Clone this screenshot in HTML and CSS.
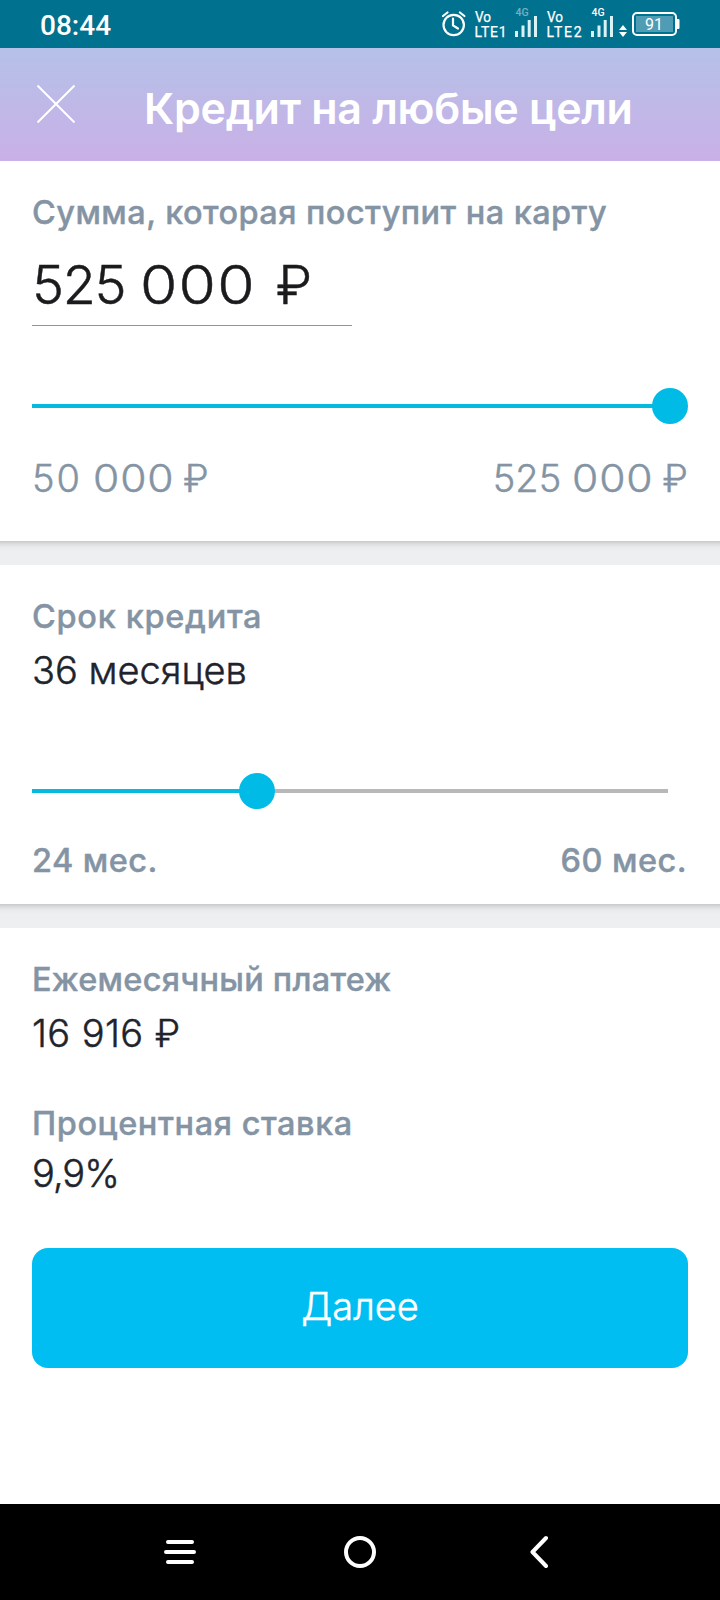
FILE: index.html
```html
<!DOCTYPE html>
<html lang="ru">
<head>
<meta charset="utf-8">
<title>Кредит на любые цели</title>
<link rel="stylesheet" href="styles.css">
</head>
<body>
<div class="status">
  <span class="clock">08:44</span>
  <svg class="indicators" width="250" height="48" viewBox="432 0 250 48" fill="none">
    <g stroke="#fff" stroke-width="2.2" stroke-linecap="round">
      <circle cx="453.7" cy="25" r="10.2"/>
      <path d="M453 18.5v7l5 3M443 16l4.500-3.500M464.400 16l-4.500-3.500"/>
    </g>
    <g fill="#fff" font-size="14" stroke="#fff" stroke-width=".25">
      <text x="475" y="22" textLength="16" lengthAdjust="spacingAndGlyphs">Vo</text>
      <text x="474.500" y="36.500" textLength="32" lengthAdjust="spacing">LTE1</text>
      <text x="547" y="22" textLength="16" lengthAdjust="spacingAndGlyphs">Vo</text>
      <text x="546.500" y="36.500" textLength="35" lengthAdjust="spacing">LTE2</text>
    </g>
    <g fill="#fff" font-size="10.500" font-weight="500">
      <text x="515.500" y="15.500" opacity=".45">4G</text>
      <text x="591.500" y="15.500">4G</text>
    </g>
    <path stroke="#d9f2f6" stroke-width="3" d="M516.500 37v-6M523 37V25.500M529.200 37V20M535.500 37V16M592.500 37v-6M599 37V25.500M605.200 37V20M611.500 37V16"/>
    <path fill="#fff" d="M619 30l4-5 4 5zM619 32l4 5 4-5z"/>
    <rect x="633" y="13" width="43" height="22" rx="4" stroke="#fff" stroke-width="2"/>
    <rect x="636" y="16" width="37" height="16" fill="#4f9db4"/>
    <path fill="#fff" d="M677 19h1.500q1 0 1 1v8q0 1-1 1H677z"/>
    <text x="654" y="30" fill="#fff" font-size="16" text-anchor="middle">91</text>
  </svg>
</div>
<header class="header">
  <svg class="close" width="38" height="38" viewBox="0 0 38 38" stroke="#fff" stroke-width="2"><path d="M.5.5l37 37M37.500.5l-37 37"/></svg>
  <h1 class="title">Кредит на любые цели</h1>
</header>
<main>
  <section class="card card-amount">
    <div class="label label-sum">Сумма, которая поступит на карту</div>
    <div class="amount"><span><span class="lead">525</span> <span class="zeros">000</span></span><span>₽</span></div>
    <div class="slider"><div class="fill" style="width:638px"></div><div class="thumb"></div></div>
    <div class="limits limits-sum"><span><span class="wide">50</span> <span class="zeros">000</span> ₽</span><span><span>525</span> <span class="zeros">000</span> ₽</span></div>
  </section>
  <div class="divider"></div>
  <section class="card card-term">
    <div class="label label-term">Срок кредита</div>
    <div class="value value-term">36 месяцев</div>
    <div class="slider"><div class="fill" style="width:225px"></div><div class="thumb"></div></div>
    <div class="limits limits-term"><span>24 мес.</span><span>60 мес.</span></div>
  </section>
  <div class="divider"></div>
  <section class="card card-result">
    <div class="label label-pay">Ежемесячный платеж</div>
    <div class="value value-pay">16 916 ₽</div>
    <div class="label label-rate">Процентная ставка</div>
    <div class="value value-rate">9,9%</div>
    <button class="next">Далее</button>
  </section>
</main>
<nav class="nav">
  <svg width="720" height="96" viewBox="0 0 720 96" fill="none" stroke="#fff" stroke-width="4" stroke-linecap="round" stroke-linejoin="round">
    <path d="M168 38h24M166 48h28M168 58h24M546 34L532.500 48 546 62"/>
    <circle cx="360" cy="48" r="14"/>
  </svg>
</nav>
</body>
</html>
```

FILE: styles.css
```css
* { box-sizing: border-box; }
body {
  margin: 0;
  width: 720px;
  height: 1600px;
  display: flex;
  flex-direction: column;
  background: #fff;
  font-family: Inter, "Liberation Sans", sans-serif;
  overflow: hidden;
}
svg { display: block; }
.status {
  height: 48px;
  padding: 0 38px 0 40px;
  display: flex;
  justify-content: space-between;
  align-items: center;
  background: #00718f;
  color: #fff;
  font-family: Roboto, sans-serif;
}
.clock { font-size: 28px; font-weight: 500; line-height: 48px; padding-top: 3px; }
.header {
  height: 113px;
  padding: 0 37px;
  display: flex;
  align-items: center;
  background: linear-gradient(#b5c1e9, #c9b0e6);
  color: #fff;
}
.close { margin: 0 69px 1px 0; }
.title {
  margin: 6px 0 0;
  font-size: 43px;
  line-height: 56px;
  font-weight: 600;
  letter-spacing: -0.27px;
  white-space: nowrap;
}
main { flex: 1; display: flex; flex-direction: column; }
.card {
  padding: 32px 32px 0;
  background: #fff;
  white-space: nowrap;
}
.card-amount { height: 380px; }
.card-term { height: 339px; }
.card-result { flex: 1; }
.divider {
  height: 24px;
  background: linear-gradient(#c8c9cb, #dcdddf 3px, #e9eaec 6px, #eeeff1 10px);
}
.label, .limits-term {
  font-size: 32.5px;
  line-height: 40px;
  font-weight: 500;
  -webkit-text-stroke: 0.4px currentColor;
  color: #8494a4;
}
.label-sum { letter-spacing: 0.43px; }
.label-term { letter-spacing: 0.7px; }
.label-pay { letter-spacing: 0.24px; }
.label-rate { letter-spacing: 0.56px; }
.amount, .limits-sum, .value, .next { -webkit-text-stroke: 0.45px currentColor; }
.amount {
  width: 320px;
  height: 73px;
  margin-top: 20px;
  display: flex;
  gap: 20px;
  border-bottom: 1px solid #45b5c0;
  font-size: 54px;
  line-height: 64px;
  font-weight: 300;
  color: #1b1b1d;
}
.lead { letter-spacing: -0.025em; }
.wide { letter-spacing: 0.05em; }
/* Thousands group is set in wider zeros than the leading digits. */
.zeros {
  display: inline-block;
  margin-right: 0.23em;
  letter-spacing: 0.02em;
  transform: scaleX(1.12);
  transform-origin: left;
}
.limits .zeros { margin-right: 0.19em; }
.slider {
  height: 36px;
  display: flex;
  align-items: center;
  background: linear-gradient(#b8b8b8, #b8b8b8) 0 50% / 636px 4px no-repeat;
}
.card-amount .slider { margin-top: 62px; }
.card-term .slider { margin-top: 79px; }
.fill { height: 4px; background: #05b9df; }
.thumb { width: 36px; height: 36px; margin-left: -18px; border-radius: 50%; background: #00bbe5; }
.limits { display: flex; justify-content: space-between; color: #8494a4; }
.limits-sum { margin-top: 30px; font-size: 38px; line-height: 48px; font-weight: 300; }
.limits-term { margin-top: 32px; padding-right: 1px; letter-spacing: 0.45px; }
.value { font-size: 38px; line-height: 48px; font-weight: 300; color: #20232b; }
.value-term, .value-pay { margin-top: 9px; }
.value-pay { letter-spacing: 0.4px; }
.label-rate { margin-top: 47px; }
.value-rate { margin-top: 5px; letter-spacing: -1px; }
.next {
  display: block;
  width: 656px;
  height: 120px;
  margin-top: 51px;
  padding: 0 0 4px;
  border: 0;
  border-radius: 16px;
  background: #00bef2;
  color: #fff;
  font: 300 38px/48px Inter, "Liberation Sans", sans-serif;
}
.nav { height: 96px; background: #000; }
```
